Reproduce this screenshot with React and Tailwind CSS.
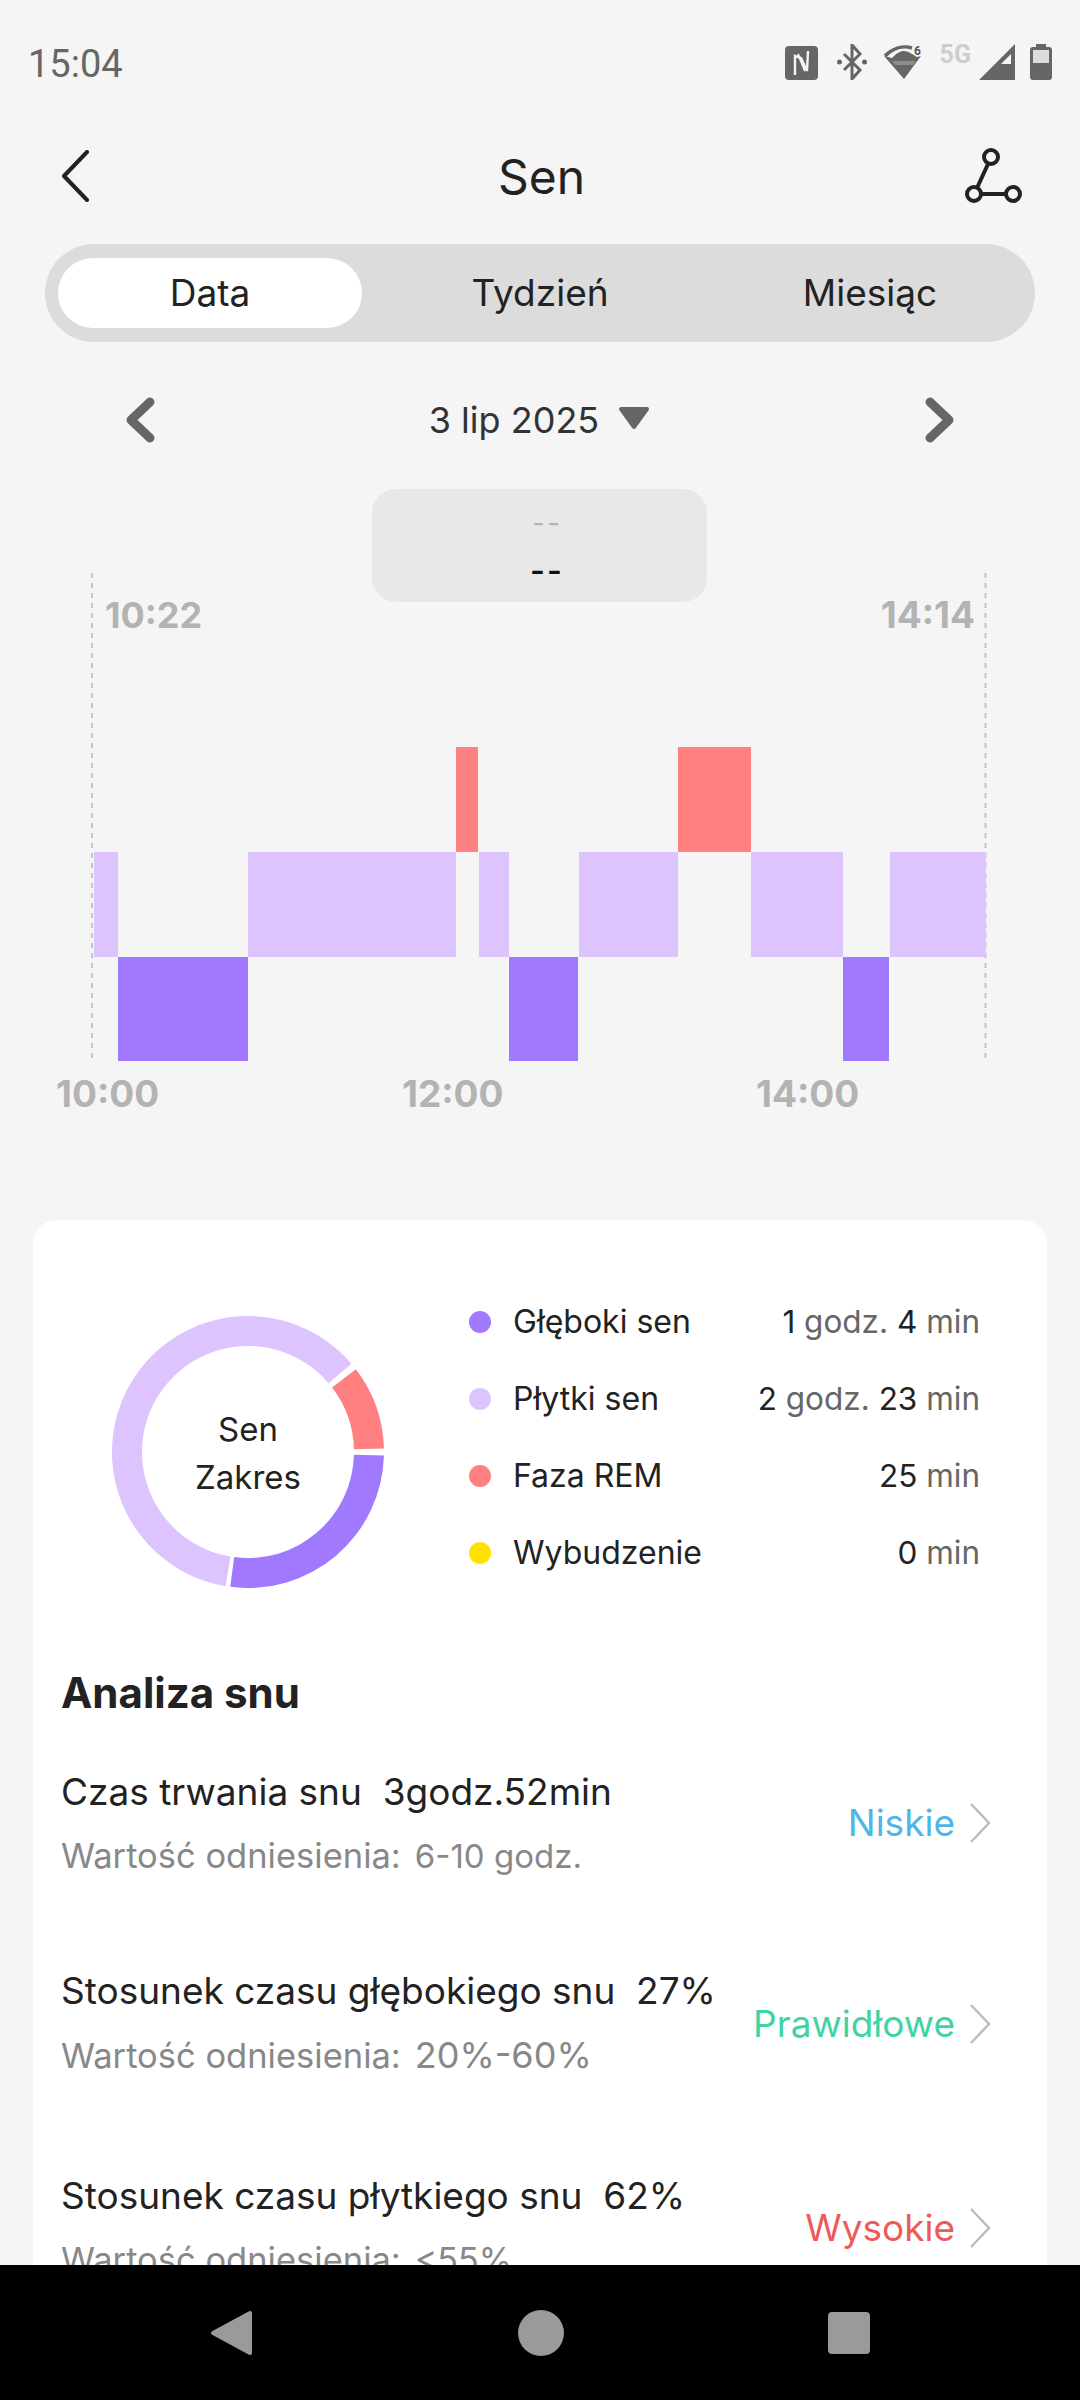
import React from "react"

const BARS = [
  { x: 94, w: 24, row: 1 },
  { x: 118, w: 130, row: 2 },
  { x: 248, w: 208, row: 1 },
  { x: 456, w: 22, row: 0 },
  { x: 479, w: 30, row: 1 },
  { x: 509, w: 69, row: 2 },
  { x: 579, w: 99, row: 1 },
  { x: 678, w: 73, row: 0 },
  { x: 751, w: 92, row: 1 },
  { x: 843, w: 46, row: 2 },
  { x: 890, w: 96, row: 1 },
]
const ROW_Y = [174, 279, 384]
const ROW_H = [105, 105, 104]
const ROW_FILL = ["#ff8080", "#dec4ff", "#a179ff"]

const LEGEND = [
  { dot: "bg-[#a179ff]", label: "Głęboki sen", value: [["1", " godz. "], ["4", " min"]] },
  { dot: "bg-[#dec4ff]", label: "Płytki sen", value: [["2", " godz. "], ["23", " min"]] },
  { dot: "bg-[#ff8080]", label: "Faza REM", value: [["25", " min"]] },
  { dot: "bg-[#ffe100]", label: "Wybudzenie", value: [["0", " min"]] },
]

const ROWS = [
  {
    title: "Czas trwania snu\u00a0 3godz.52min",
    sub: "6-10 godz.",
    subSize: "text-[33px]",
    status: "Niskie",
    color: "text-[#4db6e6]",
    wrap: "mb-[2px]",
    gap: "mt-[0px]",
  },
  {
    title: "Stosunek czasu głębokiego snu\u00a0 27%",
    sub: "20%-60%",
    subSize: "text-[36px]",
    status: "Prawidłowe",
    color: "text-[#3fd4a2]",
    wrap: "mt-[2px]",
    gap: "mt-[85px]",
  },
  {
    title: "Stosunek czasu płytkiego snu\u00a0 62%",
    sub: "<55%",
    subSize: "text-[34px]",
    status: "Wysokie",
    color: "text-[#ee5a5a]",
    wrap: "mb-[0px]",
    gap: "mt-[91px]",
  },
]

function arc(startDeg, endDeg) {
  const cx = 136
  const cy = 136
  const ro = 136
  const ri = 106
  const pt = (r, d) => {
    const a = (d * Math.PI) / 180
    return `${(cx + r * Math.cos(a)).toFixed(2)} ${(cy + r * Math.sin(a)).toFixed(2)}`
  }
  const large = endDeg - startDeg > 180 ? 1 : 0
  return `M${pt(ro, startDeg)} A${ro} ${ro} 0 ${large} 1 ${pt(ro, endDeg)} L${pt(ri, endDeg)} A${ri} ${ri} 0 ${large} 0 ${pt(ri, startDeg)} Z`
}

function StatusIcons() {
  return (
    <div className="flex items-start pt-[44px] pr-[28px]">
      <svg className="w-[33px] h-[34px] mt-[2px]" viewBox="0 0 33 34">
        <rect width="33" height="34" rx="4" fill="#666" />
        <path d="M10 29V10l6 2 6 13 1-20" fill="none" stroke="#f5f5f5" strokeWidth="2.400" />
        <path d="M13 8l7 17" fill="none" stroke="#f5f5f5" strokeWidth="2" />
      </svg>
      <svg className="w-[30px] h-[36px] ml-[19px]" viewBox="0 0 30 36">
        <path d="M7 10l16 16-8 9V1l8 9L7 26" fill="none" stroke="#666" strokeWidth="3" />
        <circle cx="2.500" cy="18" r="2.500" fill="#666" />
        <circle cx="27.500" cy="18" r="2.500" fill="#666" />
      </svg>
      <svg className="w-[42px] h-[36px] ml-[16px]" viewBox="0 0 42 36">
        <path d="M2 12C9 5 19 1 29 4" fill="none" stroke="#666" strokeWidth="3.500" />
        <path d="M9 14C14 9 17 7 21 7c4 0 8 3 13 6l4-1-17 23L1 12z" fill="#666" />
        <path d="M9 17h24l-3 4H12z" fill="#8b8b8b" />
        <text x="31" y="11" fontSize="12" fontWeight="700" fontFamily="Roboto, sans-serif" fill="#555">6</text>
      </svg>
      <span className="ml-[15px] mt-[-1px] text-[25px] leading-[24px] font-bold text-[#cdcdcd] font-['Roboto',sans-serif]">
        5G
      </span>
      <svg className="w-[36px] h-[36px] ml-[8px]" viewBox="0 0 36 36">
        <path d="M0 36L36 0v36z" fill="#666" />
        <path d="M22 20l10-10v10z" fill="#f5f5f5" />
      </svg>
      <svg className="w-[22px] h-[36px] ml-[15px]" viewBox="0 0 22 36">
        <rect x="6" width="10" height="5" fill="#666" />
        <rect y="3" width="22" height="33" rx="3" fill="#666" />
        <rect x="3" y="6" width="16" height="13" fill="#dcdcdc" />
      </svg>
    </div>
  )
}

export default function App() {
  return (
    <div className="w-[1080px] h-[2400px] flex flex-col overflow-hidden bg-[#f5f5f5] text-[#222] font-['Inter',sans-serif]">
      {/* status bar */}
      <div className="h-[126px] flex justify-between">
        <span className="pl-[28px] pt-[43px] text-[38px] leading-[42px] text-[#666] font-['Roboto',sans-serif]">15:04</span>
        <StatusIcons />
      </div>

      {/* header */}
      <div className="h-[102px] flex items-center justify-between pl-[60px] pr-[57px]">
        <div className="w-[60px] -mt-[3px]">
          <svg className="block w-[30px] h-[52px]" viewBox="0 0 30 52">
            <path d="M27 2L4 26l23 24" fill="none" stroke="#222" strokeWidth="4" strokeLinecap="round" strokeLinejoin="round" />
          </svg>
        </div>
        <span className="text-[48px] leading-[56px]">Sen</span>
        <svg className="w-[60px] h-[60px]" viewBox="0 0 60 60">
          <g fill="none" stroke="#222" strokeWidth="4">
            <circle cx="28" cy="10" r="7" />
            <circle cx="11" cy="47" r="7" />
            <circle cx="50" cy="47" r="7" />
            <path d="M25 17L14 41M18 47h25" />
          </g>
        </svg>
      </div>

      {/* tabs */}
      <div className="mt-[16px] mx-[45px] h-[98px] rounded-full bg-[#dcdcdc] grid grid-cols-3 items-center text-[37px] leading-[44px] text-center">
        <div className="ml-[13px] mr-[13px] h-[70px] rounded-[35px] bg-white flex items-center justify-center">Data</div>
        <div>Tydzień</div>
        <div>Miesiąc</div>
      </div>

      {/* date picker */}
      <div className="mt-[50px] h-[56px] px-[125px] flex items-center justify-between">
        <svg className="w-[30px] h-[46px]" viewBox="0 0 30 46">
          <path d="M25 5L6 23l19 18" fill="none" stroke="#666" strokeWidth="9" strokeLinecap="round" strokeLinejoin="round" />
        </svg>
        <div className="flex items-center gap-[18px] text-[36px] leading-[44px] text-[#333]">
          <span>3 lip 2025</span>
          <svg className="w-[34px] h-[24px] -mt-[4px]" viewBox="0 0 34 24">
            <path d="M4 3h26L17 21z" fill="#666" stroke="#666" strokeWidth="4" strokeLinejoin="round" />
          </svg>
        </div>
        <svg className="w-[30px] h-[46px]" viewBox="0 0 30 46">
          <path d="M5 5l19 18L5 41" fill="none" stroke="#666" strokeWidth="9" strokeLinecap="round" strokeLinejoin="round" />
        </svg>
      </div>

      {/* chart */}
      <div className="relative h-[772px] pt-[125px]">
        <div className="absolute left-[372px] top-[41px] w-[335px] h-[113px] rounded-[24px] bg-[#e8e8e8] flex flex-col items-center pt-[16px] pl-[15px] z-10">
          <span className="text-[28px] leading-[36px] tracking-[2px] text-[#b5b5b5]">--</span>
          <span className="mt-[12px] text-[32px] leading-[36px] tracking-[2px] font-semibold text-[#111]">--</span>
        </div>
        <span className="absolute left-[105px] top-[145px] text-[36px] leading-[44px] font-bold text-[#b3b3b3]">10:22</span>
        <span className="absolute right-[105px] top-[145px] text-[37px] leading-[44px] font-bold text-[#b3b3b3]">14:14</span>

        <svg className="block w-[1080px] h-[488px]" viewBox="0 0 1080 488">
          <path d="M92 0V486M985.500 0V486" stroke="#c4c4c4" strokeWidth="2" strokeDasharray="5 5" fill="none" />
          {BARS.map((b) => (
            <rect key={b.x} x={b.x} y={ROW_Y[b.row]} width={b.w} height={ROW_H[b.row]} fill={ROW_FILL[b.row]} />
          ))}
        </svg>

        <div className="h-[44px] mt-[11px] text-[37px] leading-[44px] font-bold text-[#b3b3b3]">
          <div className="flex">
            <span className="ml-[56px] w-[346px]">10:00</span>
            <span className="w-[354px]">12:00</span>
            <span>14:00</span>
          </div>
        </div>
      </div>

      {/* card */}
      <div className="flex-1 min-h-0 overflow-hidden mx-[33px] rounded-t-[24px] bg-white">
        <div className="pt-[63px] pl-[79px] pr-[67px] flex">
          <div className="relative mt-[33px] w-[272px] h-[272px]">
            <svg className="w-[272px] h-[272px]" viewBox="0 0 272 272">
              <path d={arc(1.5, 97.5)} fill="#a179ff" />
              <path d={arc(99.5, 319.5)} fill="#dec4ff" />
              <path d={arc(322.5, 358.500)} fill="#ff8080" />
            </svg>
            <div className="absolute inset-0 flex flex-col items-center justify-center pt-[1px] text-[33px] leading-[48px] text-[#222]">
              <span>Sen</span>
              <span>Zakres</span>
            </div>
          </div>
          <div className="flex-1 ml-[85px]">
            {LEGEND.map((item) => (
              <div key={item.label} className="h-[77px] flex items-center">
                <span className={`w-[22px] h-[22px] rounded-full ${item.dot}`}></span>
                <span className="ml-[22px] flex-1 text-[32px] text-[#222]">{item.label}</span>
                <span className="text-[31.5px] text-[#666]">
                  {item.value.map(([num, unit]) => (
                    <React.Fragment key={num}>
                      <span className="text-[#222]">{num}</span>
                      {unit}
                    </React.Fragment>
                  ))}
                </span>
              </div>
            ))}
          </div>
        </div>

        <h2 className="mt-[77px] pl-[28px] text-[42px] leading-[50px] font-bold text-[#222]">Analiza snu</h2>

        <div className="mt-[49px] pl-[28px] pr-[56px] flex flex-col">
          {ROWS.map((row) => (
            <div key={row.status} className={`h-[114px] flex items-center justify-between ${row.gap}`}>
              <div>
                <div className="text-[37px] leading-[50px] text-[#222]">{row.title}</div>
                <div className="mt-[14px] h-[50px] text-[34.500px] leading-[50px] text-[#888]">
                  Wartość odniesienia:<span className={`ml-[14px] ${row.subSize}`}>{row.sub}</span>
                </div>
              </div>
              <div className={`flex items-center gap-[14px] ${row.wrap}`}>
                <span className={`text-[37px] leading-[50px] ${row.color}`}>{row.status}</span>
                <svg className="w-[22px] h-[42px]" viewBox="0 0 22 42">
                  <path d="M2 2l18 19L2 40" fill="none" stroke="#bdbdbd" strokeWidth="2.500" />
                </svg>
              </div>
            </div>
          ))}
        </div>
      </div>

      {/* navigation bar */}
      <div className="h-[135px] shrink-0 bg-black flex items-center justify-between px-[208px]">
        <svg className="w-[46px] h-[48px]" viewBox="0 0 46 48">
          <path d="M42 4v40L5 24z" fill="#9a9a9a" stroke="#9a9a9a" strokeWidth="4" strokeLinejoin="round" />
        </svg>
        <span className="w-[46px] h-[46px] rounded-full bg-[#9a9a9a]"></span>
        <span className="w-[42px] h-[42px] rounded-[4px] bg-[#9a9a9a] mr-[2px]"></span>
      </div>
    </div>
  )
}
